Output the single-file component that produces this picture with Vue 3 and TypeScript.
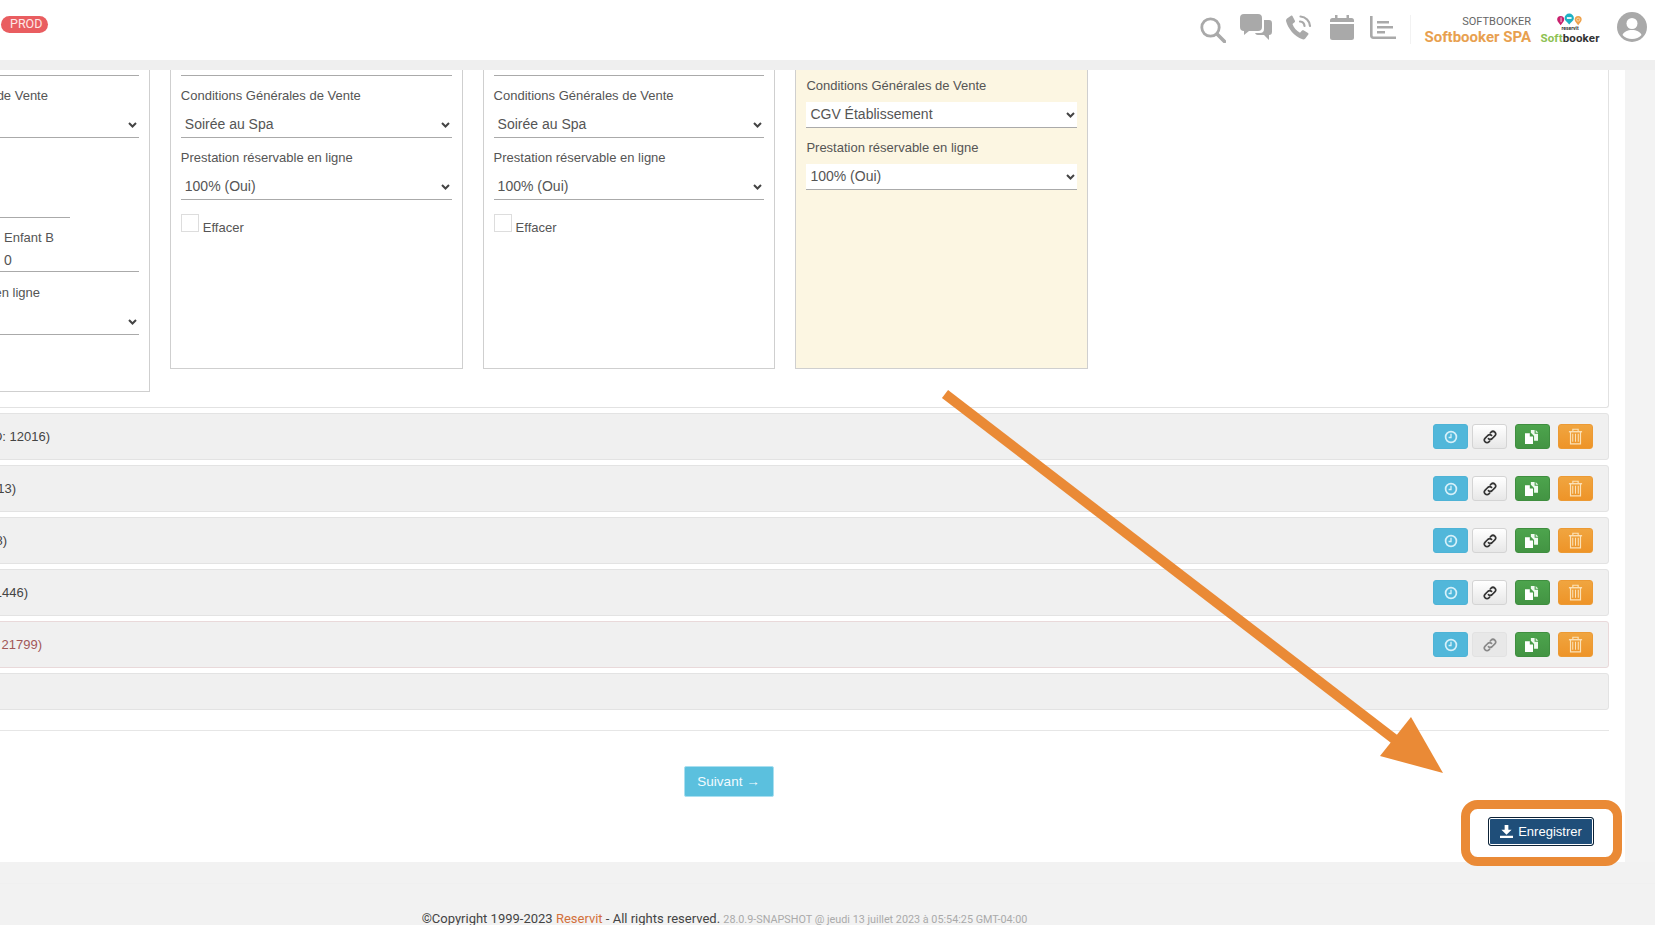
<template>
  <div class="app">
    <header class="topbar">
      <span class="badge">PROD</span>
      <div class="tools">
        <svg class="ico ico-search" viewBox="0 0 26 26"><circle cx="10.5" cy="10.5" r="8.7" fill="none" stroke="#a9a9a9" stroke-width="2.8" /><path d="M17 17l7.5 7.5" stroke="#a9a9a9" stroke-width="3.6" stroke-linecap="round" /></svg>
        <svg class="ico ico-chat" viewBox="0 0 32 26"><path d="M4 0h14a4 4 0 0 1 4 4v9a4 4 0 0 1-4 4H9l-5 4v-4a4 4 0 0 1-4-4V4a4 4 0 0 1 4-4z" fill="#a9a9a9" /><path d="M24 6h5a3 3 0 0 1 3 3v9a3 3 0 0 1-3 3v5l-5-5h-6a3 3 0 0 1-3-2h5a4 4 0 0 0 4-4z" fill="#a9a9a9" /></svg>
        <svg class="ico ico-phone" viewBox="0 0 26 25"><path d="M1 3.5 5 .8c.6-.4 1.3-.2 1.6.4l2.300 4.600c.3.5.1 1.100-.3 1.500L6.500 9c1 3.400 4 7 7.500 8.700l2-2.200c.4-.4 1-.5 1.500-.2l4.500 2.700c.6.300.7 1.100.3 1.600l-3 3.800c-.7.800-1.800 1.200-2.800.9C8.200 21.500 2 13.500.1 6.300-.2 5.300.2 4.200 1 3.500z" fill="#a9a9a9" /><path d="M14 6.500a5 5 0 0 1 4.500 4.500M14.500 1.500A10 10 0 0 1 24 11" fill="none" stroke="#a9a9a9" stroke-width="2.2" stroke-linecap="round" /></svg>
        <svg class="ico ico-cal" viewBox="0 0 24 25"><path d="M5 0h2.500v3h9V0H19v3h2.500A2.500 2.500 0 0 1 24 5.500V7H0V5.500A2.500 2.500 0 0 1 2.500 3H5zM0 9h24v13.500a2.500 2.500 0 0 1-2.500 2.500h-19A2.500 2.500 0 0 1 0 22.500z" fill="#a9a9a9" /></svg>
        <svg class="ico ico-chart" viewBox="0 0 26 23"><path d="M1.3 0v19.500a2.200 2.200 0 0 0 2.200 2.200H26" fill="none" stroke="#a9a9a9" stroke-width="2.6" /><path d="M7 5h12v2.600H7zM7 10h16v2.600H7zM7 15h8v2.600H7z" fill="#a9a9a9" /></svg>
        <div class="divider"></div>
        <div class="account">
          <span class="group">SOFTBOOKER</span>
          <span class="hotel">Softbooker SPA</span>
        </div>
        <div class="logo">
          <svg class="balloons" viewBox="0 0 40 18">
            <path d="M8 17c-2-2.500-4.500-4.500-4.500-7.200a4.500 4.500 0 0 1 9 0c0 2.700-2.500 4.700-4.500 7.200z" fill="#c9226e" />
            <path d="M8.500 7v6" stroke="#fbd7e6" stroke-width="1.2" />
            <path d="M19 16c-2.500-3-6-5-6-8a6 6 0 0 1 12 0c0 3-3.500 5-6 8z" fill="#1fb1c4" />
            <path d="M16 6.500h6v2.500h-6z" fill="#e6f8fa" />
            <path d="M30.500 17c-2-2.500-4.500-4.500-4.500-7.200a4.500 4.500 0 0 1 9 0c0 2.700-2.500 4.700-4.500 7.200z" fill="#eea24c" />
            <circle cx="30.500" cy="9.800" r="2" fill="none" stroke="#fbe3c4" stroke-width="1" />
          </svg>
          <span class="logo-small">reservit</span>
          <span class="logo-name"><span class="soft">Soft</span>booker</span>
        </div>
        <svg class="avatar" viewBox="0 0 30 30"><circle cx="15" cy="15" r="15" fill="#a9a9a9" /><circle cx="15" cy="11.500" r="5.500" fill="#fff" /><path d="M5.500 23c1.500-3.500 5-5 9.500-5s8 1.500 9.500 5c-2.300 2.500-5.700 4-9.500 4s-7.200-1.500-9.500-4z" fill="#fff" /></svg>
      </div>
    </header>

    <main class="sheet">
      <section class="panels">
        <div class="panel panel-tall">
          <div class="blank"></div>
          <div class="field">
            <label>Conditions Générales de Vente</label>
            <select><option>Soirée au Spa</option></select>
          </div>
          <div class="blank blank-short"></div>
          <div class="pair">
            <div class="cell"><label>Enfant A</label><div class="number">0</div></div>
            <div class="cell"><label>Enfant B</label><div class="number">0</div></div>
          </div>
          <div class="field field-last">
            <label>Prestation réservable en ligne</label>
            <select><option>100% (Oui)</option></select>
          </div>
        </div>

        <div v-for="n in 2" :key="n" class="panel">
          <div class="blank"></div>
          <div class="field">
            <label>Conditions Générales de Vente</label>
            <select><option>Soirée au Spa</option></select>
          </div>
          <div class="field">
            <label>Prestation réservable en ligne</label>
            <select><option>100% (Oui)</option></select>
          </div>
          <div class="erase">
            <span class="check"></span>
            <span class="erase-text">Effacer</span>
          </div>
        </div>

        <div class="panel panel-new">
          <div class="field">
            <label>Conditions Générales de Vente</label>
            <select><option>CGV Établissement</option></select>
          </div>
          <div class="field">
            <label>Prestation réservable en ligne</label>
            <select><option>100% (Oui)</option></select>
          </div>
        </div>
      </section>

      <div
        v-for="row in rows"
        :key="row.label"
        :class="['row', { 'row-off': row.off }]"
      >
        <div class="row-label" :style="{ width: row.end + 'px' }"><span>{{ row.label }}</span></div>
        <div class="actions">
          <button class="btn btn-info">
            <svg viewBox="0 0 14 14"><circle cx="7" cy="7" r="5.400" fill="none" stroke="#d6f0f9" stroke-width="1.700" /><path d="M7 3.800V7.500H4.600" fill="none" stroke="#d6f0f9" stroke-width="1.300" /></svg>
          </button>
          <button class="btn btn-link">
            <svg viewBox="0 0 16 16"><g transform="rotate(-45 8 8)" fill="none" stroke="currentColor" stroke-width="1.900" stroke-linecap="round"><path d="M4.500 11H3.200a3 3 0 0 1 0-6h4.600a3 3 0 0 1 2.700 3" /><path d="M11.500 5h1.300a3 3 0 0 1 0 6H8.200a3 3 0 0 1-2.700-3" /></g></svg>
          </button>
          <button class="btn btn-green">
            <svg class="copy" viewBox="0 0 15 15"><path d="M0 4h4.500v3h3v7H0z" fill="#fff" /><path d="M5.500 1H9v3.500h3.200V11H8.500V6.500l-3-3z" fill="#f0faf0" /><path d="M10 1l2.500 2.500H10z" fill="#e2f4e2" /></svg>
          </button>
          <button class="btn btn-orange">
            <svg class="trash" viewBox="0 0 14 16"><g fill="none" stroke="#fbe2b8" stroke-width="1.100"><path d="M.8 3.500h12.400" stroke-width="1.300" /><path d="M4.500 3.300V1.200h5v2.100" /><path d="M2.300 3.500V15h9.400V3.500" /></g><path d="M4.400 5.500v7.500M7 5.500v7.500M9.600 5.500v7.500" stroke="#fbe2b8" stroke-width="1" /></svg>
          </button>
        </div>
      </div>
      <div class="row row-empty"></div>

      <hr class="rule" />

      <div class="pager">
        <button class="next">Suivant →</button>
      </div>

      <div class="save-bar">
        <button class="save">
          <svg viewBox="0 0 14 14"><path d="M5 0h4v5h3.500L7 10.500 1.500 5H5zM0 11.500h14V14H0z" fill="#fff" /></svg>
          Enregistrer
        </button>
      </div>
    </main>

    <footer class="foot">
      <p>©Copyright 1999-2023 <a>Reservit</a> - All rights reserved. <small>28.0.9-SNAPSHOT @ jeudi 13 juillet 2023 à 05:54:25 GMT-04:00</small></p>
    </footer>

    <svg class="callout" viewBox="0 0 1655 925">
      <path d="M945 394 1402 745" stroke="#ea8a36" stroke-width="10" />
      <path d="M1411 717 1443 773 1380 756z" fill="#ea8a36" />
      <rect x="1465.5" y="804.5" width="152" height="57" rx="12" fill="none" stroke="#ea8a36" stroke-width="9" />
    </svg>
  </div>
</template>

<script setup lang="ts">
interface Row {
  label: string
  end: number
  off?: boolean
}

const rows: Row[] = [
  { label: 'Soin signature (ID: 12016)', end: 201 },
  { label: 'Modelage (ID: 12013)', end: 167 },
  { label: 'Hammam (ID: 12018)', end: 158 },
  { label: 'Gommage (ID: 21446)', end: 179 },
  { label: 'Sauna (ID: 21799)', end: 193, off: true },
]
</script>

<style>
html,
body {
  margin: 0;
  height: 100%;
  overflow: hidden;
  background: #f3f3f3;
}
</style>

<style scoped>
.app {
  position: relative;
  height: 925px;
  overflow: hidden;
  font-family: "Liberation Sans", Arial, sans-serif;
  color: #555;
}

.topbar {
  position: relative;
  z-index: 2;
  height: 60px;
  background: #fff;
  display: flex;
  justify-content: space-between;
  box-shadow: 0 10px 0 #efefef;
  font-family: Roboto, sans-serif;
}

.badge {
  margin: 16px 0 0 1px;
  height: 17px;
  width: 47px;
  box-sizing: border-box;
  padding-left: 9px;
  border-radius: 9px;
  background: #e95d60;
  color: #fde6e6;
  font-size: 12.5px;
  line-height: 16px;
}

.tools {
  display: flex;
  align-items: flex-start;
}

.ico {
  display: block;
  flex: none;
}

.ico-search {
  width: 26px;
  height: 26px;
  margin-top: 17px;
}

.ico-chat {
  width: 32px;
  height: 26px;
  margin: 14px 0 0 14px;
}

.ico-phone {
  width: 26px;
  height: 25px;
  margin: 15px 0 0 14px;
}

.ico-cal {
  width: 24px;
  height: 25px;
  margin: 15px 0 0 18px;
}

.ico-chart {
  width: 26px;
  height: 23px;
  margin: 16px 0 0 16px;
}

.divider {
  width: 1px;
  height: 29px;
  margin: 15px 0 0 14px;
  background: #f2f2f2;
}

.account {
  width: 120px;
  display: flex;
  flex-direction: column;
  align-items: flex-end;
  padding-top: 15px;
}

.group {
  font-size: 11px;
  line-height: 14px;
  color: #666;
}

.hotel {
  margin-top: -1px;
  font-size: 15px;
  font-weight: 700;
  line-height: 18px;
  color: #e8a04f;
}

.logo {
  position: relative;
  width: 60px;
  height: 34px;
  margin: 12px 0 0 9px;
  display: flex;
  flex-direction: column;
  align-items: center;
}

.balloons {
  width: 40px;
  height: 18px;
  display: block;
}

.logo-small {
  font-size: 5px;
  line-height: 4px;
  font-weight: 700;
  color: #333;
}

.logo-name {
  font-size: 11.5px;
  line-height: 16px;
  font-weight: 700;
  letter-spacing: 0.15px;
  color: #333;
  white-space: nowrap;
}

.soft {
  color: #8cc152;
}

.avatar {
  width: 30px;
  height: 30px;
  margin: 12px 8px 0 17px;
  flex: none;
}

.sheet {
  width: 1777px;
  margin-left: -152px;
  height: 852px;
  margin-top: -50px;
  background: #fff;
  box-sizing: border-box;
  padding-top: 40px;
  padding-right: 16px;
}

.panels {
  display: flex;
  align-items: flex-start;
  gap: 20px;
  height: 358px;
  box-sizing: border-box;
  padding: 0 0 0 8px;
  border: 1px solid #e2e2e2;
  border-top: 0;
  border-radius: 0 0 3px 3px;
}

.panel {
  box-sizing: border-box;
  width: 292.8px;
  height: 319px;
  padding: 0 10px;
  border: 1px solid #cfcfcf;
  flex: none;
}

.panel-tall {
  height: 342px;
}

.panel-new {
  background: #fcf6e2;
  padding-top: 15px;
}

.blank {
  height: 24px;
  border-bottom: 1px solid #aaa;
}

.blank-short {
  width: 202px;
  margin-top: 55px;
}

.field {
  padding-top: 9px;
}

label {
  display: block;
  height: 20px;
  font-size: 13px;
  line-height: 22px;
  color: #555;
  margin-bottom: 7px;
}

select {
  display: block;
  width: 100%;
  height: 26px;
  box-sizing: border-box;
  appearance: none;
  border: 0;
  border-bottom: 1px solid #aaa;
  border-radius: 0;
  background: #fff url("data:image/svg+xml,%3Csvg xmlns='http://www.w3.org/2000/svg' width='9' height='6'%3E%3Cpath d='M1 1l3.500 3.500L8 1' fill='none' stroke='%23444' stroke-width='2'/%3E%3C/svg%3E") no-repeat right 2px center;
  padding: 0 0 1px 4px;
  font-family: inherit;
  font-size: 14px;
  color: #555;
}

.field-last {
  padding-top: 10px;
}

.pair {
  display: grid;
  grid-template-columns: 136px 135px;
  padding-top: 9px;
}

.cell label {
  margin-bottom: 1px;
}

.number {
  height: 24px;
  box-sizing: border-box;
  border-bottom: 1px solid #aaa;
  font-size: 14px;
  line-height: 24px;
}

.erase {
  display: flex;
  align-items: flex-start;
  gap: 4px;
  margin-top: 14px;
  font-size: 13px;
}

.check {
  width: 18px;
  height: 18px;
  box-sizing: border-box;
  border: 1px solid #ddd;
  background: #fff;
}

.erase-text {
  margin-top: 6px;
  line-height: 16px;
}

.row {
  height: 47px;
  margin-top: 5px;
  box-sizing: border-box;
  display: flex;
  align-items: center;
  justify-content: space-between;
  padding-right: 15px;
  background: #f0f0f0;
  border: 1px solid #e3e3e3;
  border-radius: 3px;
  font-size: 13px;
  color: #444;
}

.row-off {
  border-color: #e9d9da;
  color: #a25757;
}

.row-empty {
  height: 37px;
}

.row-label {
  display: flex;
  justify-content: flex-end;
  white-space: nowrap;
  margin-bottom: 1px;
}

.actions {
  display: flex;
  gap: 4px;
}

.btn {
  width: 35px;
  height: 25px;
  padding: 0;
  box-sizing: border-box;
  display: flex;
  align-items: center;
  justify-content: center;
  border-radius: 3px;
  border: 1px solid transparent;
  color: #333;
}

.btn svg {
  width: 14px;
  height: 14px;
}

.btn .copy {
  width: 16px;
  height: 16px;
}

.btn .trash {
  width: 15px;
  height: 17px;
}

.btn-info {
  background: #51b7da;
  border-color: #4eb3d6;
}

.btn-link {
  background: linear-gradient(#fff, #e7e7e7);
  border-color: #d4d4d4;
}

.row-off .btn-link {
  background: #e8e8e8;
  border-color: #e2e2e2;
  color: #888;
}

.btn-green {
  margin-left: 4px;
  background: linear-gradient(#4da44d, #439443);
  border-color: #3f8e3f;
}

.btn-orange {
  margin-left: 4px;
  background: linear-gradient(#f0a540, #ee9428);
  border-color: #ec9a34;
}

.rule {
  margin: 20px 0 0 0;
  height: 1px;
  border: 0;
  background: #e6e6e6;
}

.pager {
  display: flex;
  justify-content: center;
  padding-top: 35px;
}

.next {
  width: 90px;
  height: 31px;
  padding: 0;
  border: 1px solid #a9dff0;
  border-radius: 2px;
  background: #5bc0de;
  color: #f2fbfe;
  font-family: inherit;
  font-size: 13.5px;
}

.save-bar {
  display: flex;
  justify-content: flex-end;
  padding: 20px 15px 0 0;
}

.save {
  width: 106px;
  height: 29px;
  padding: 0;
  display: flex;
  align-items: center;
  justify-content: center;
  gap: 5px;
  border: 1px solid #0d2236;
  border-radius: 3px;
  background: #1f4e79;
  box-shadow: inset 0 0 0 1px #fff;
  color: #fff;
  font-family: inherit;
  font-size: 13px;
}

.save svg {
  width: 13px;
  height: 13px;
}

.foot {
  height: 63px;
  box-sizing: border-box;
  font-family: Roboto, sans-serif;
  background: linear-gradient(#f2f2f2 21px, #eeeeee 21px, #f2f2f2 22px);
  text-align: center;
  width: 100%;
  padding-top: 48px;
}

.foot p {
  margin: 0 0 0 139px;
  width: 1171px;
  font-size: 13px;
  line-height: 18px;
  color: #444;
  white-space: nowrap;
}

.foot a {
  color: #d2703a;
}

.foot small {
  font-size: 10.8px;
  color: #aaa;
}

.callout {
  position: absolute;
  left: 0;
  top: 0;
  width: 1655px;
  height: 925px;
  pointer-events: none;
  z-index: 3;
}
</style>
